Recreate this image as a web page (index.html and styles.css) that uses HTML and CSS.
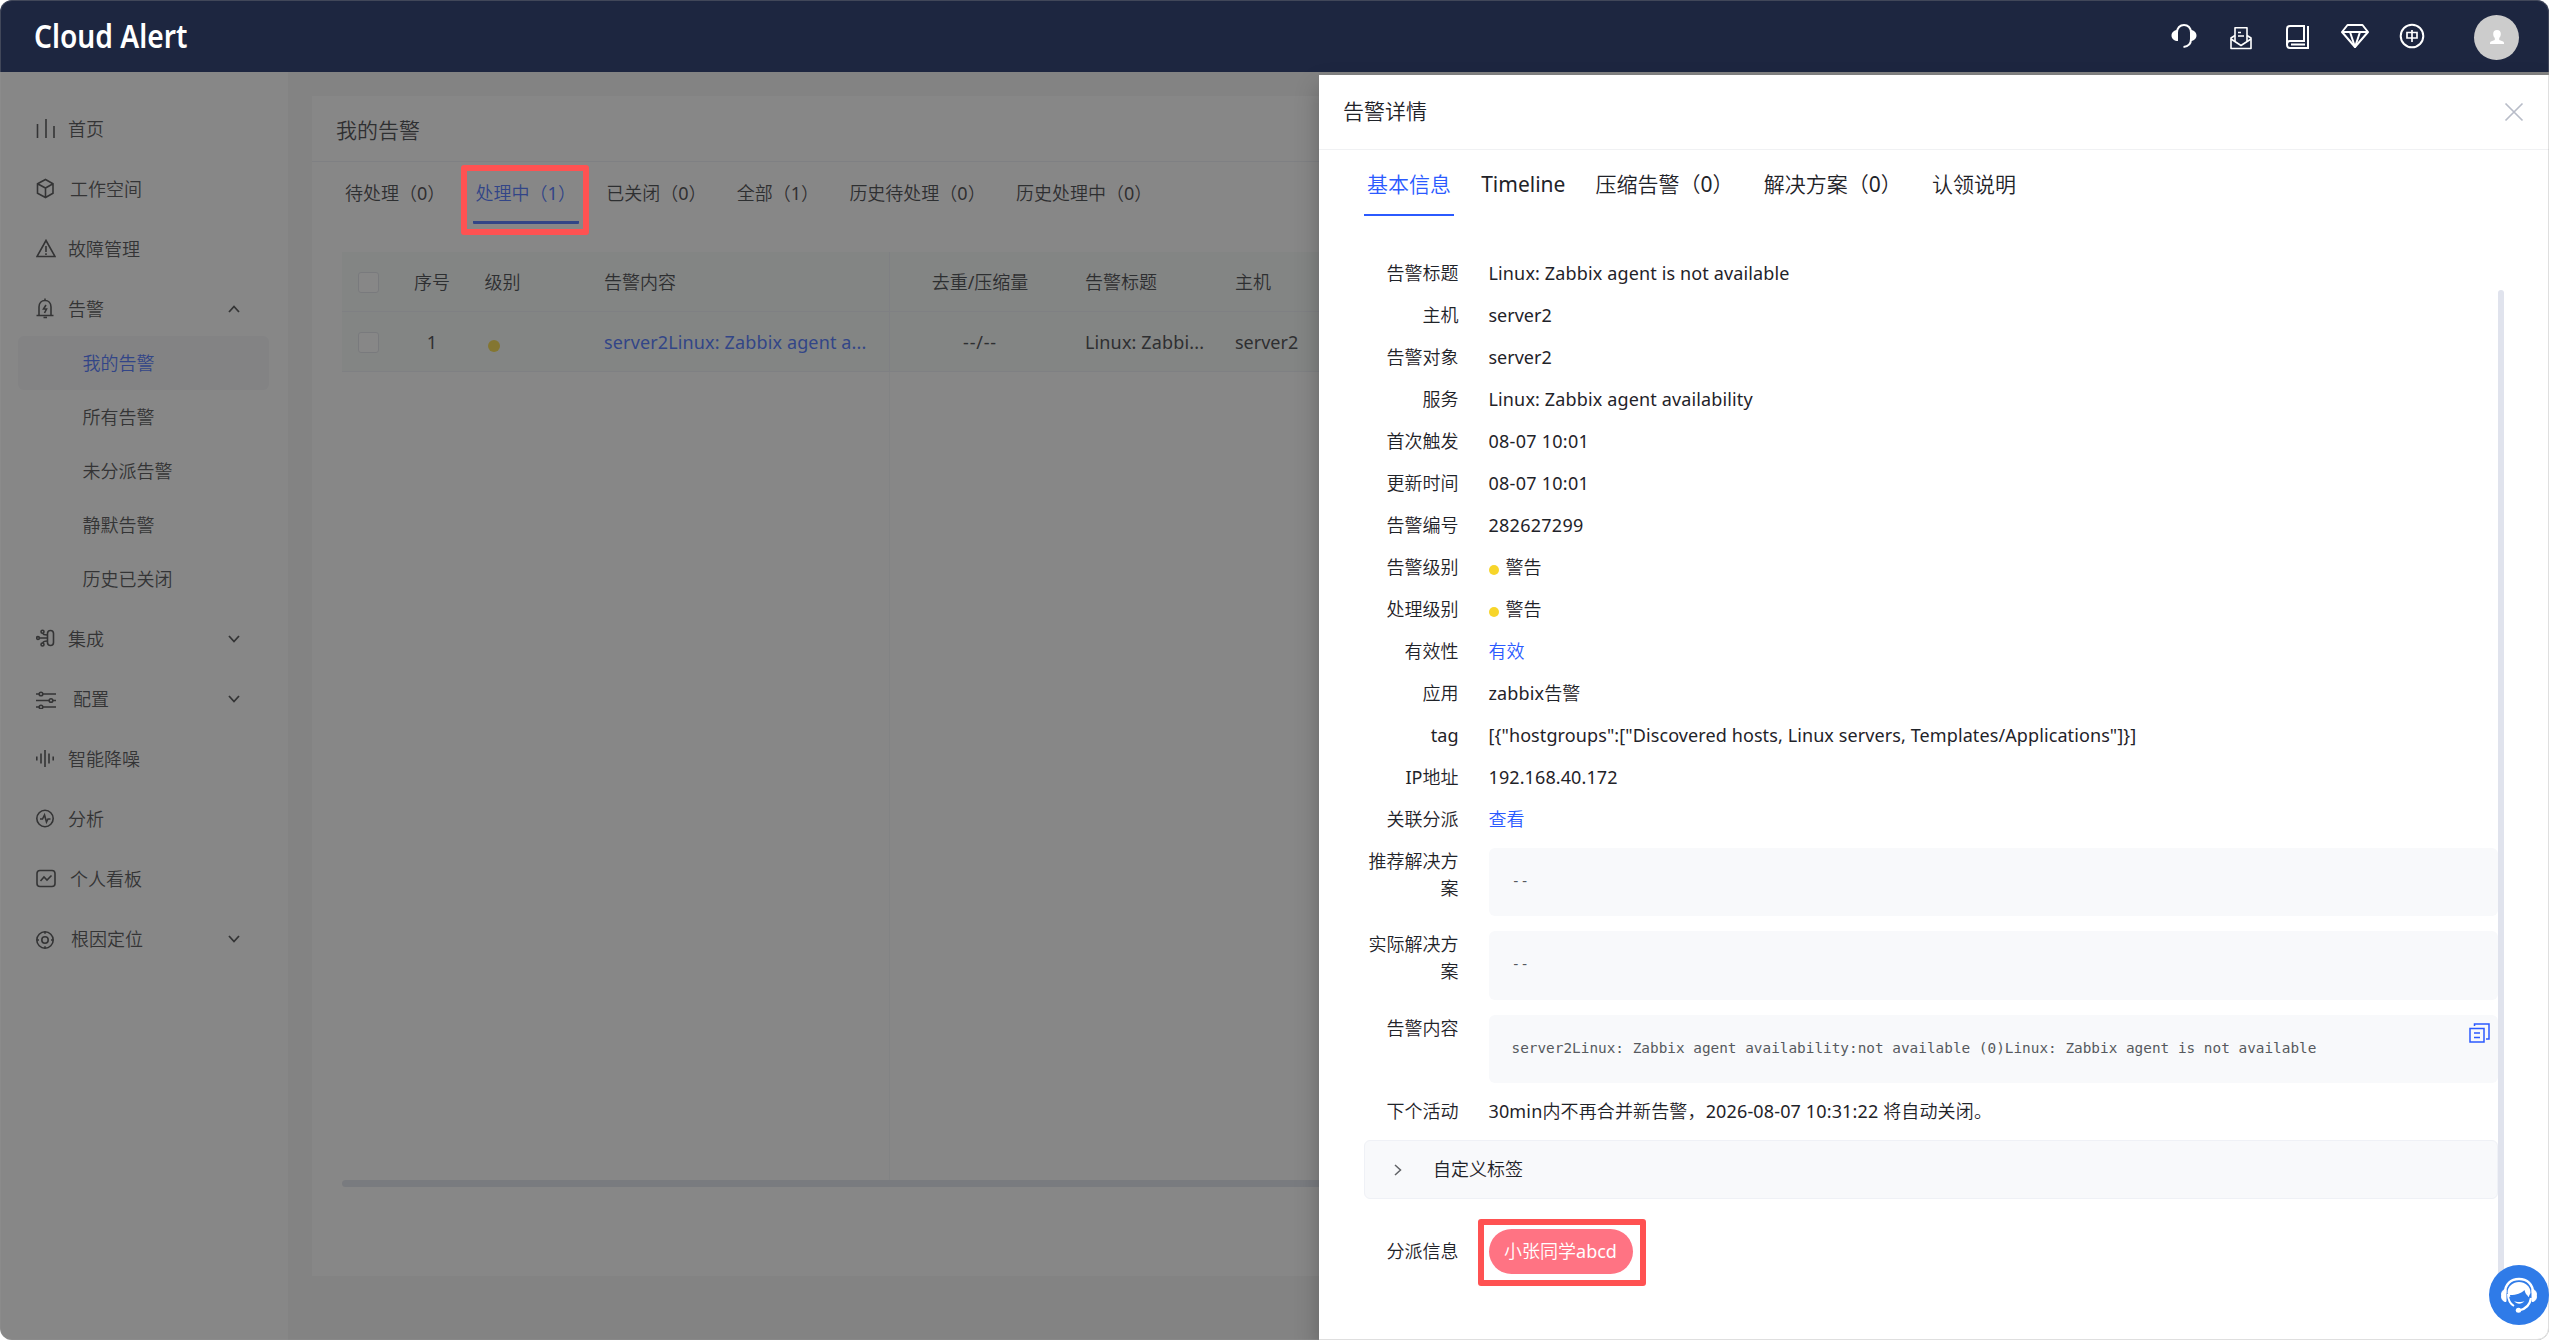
FILE: index.html
```html
<!DOCTYPE html>
<html lang="zh-CN">
<head>
    <meta charset="UTF-8">
    <meta name="viewport" content="width=device-width, initial-scale=1.0">
    <title>Cloud Alert</title>
    <link rel="stylesheet" href="styles.css">
</head>
<body>
<div class="window">
    <header class="topbar">
        <div class="logo">Cloud Alert</div>
        <div class="top-icons">
            <span class="top-icon"><svg width="26" height="26" viewBox="0 0 26 26" fill="none" stroke="#fff" stroke-width="2"><path d="M6 13V9.500C6 5 9 2 13 2s7 3 7 7.500V16c0 5-3 7.500-7.500 8"/><path d="M7 7v11C3.500 18 0.500 16 0.500 12.500S3.500 7 7 7zM19 7v11c3.500 0 6.500-2 6.500-5.500S22.500 7 19 7z" fill="#fff" stroke="none"/></svg></span>
            <span class="top-icon mail"><svg width="24" height="24" viewBox="0 0 24 24" fill="none" stroke="#fff" stroke-width="1.600" stroke-linejoin="round"><path d="M6 9.500L2 12v10.500h20V12l-4-2.500"/><path d="M6 15V1.800h12V15"/><path d="M2 13l10 6.500L22 13"/><path d="M9 6.500h3M9 10h6"/></svg></span>
            <span class="top-icon book"><svg width="24" height="26" viewBox="0 0 24 26" fill="none" stroke="#fff" stroke-width="2"><path d="M22 2v22H4c-2 0-3-1-3-3V5c0-2 1-3 3-3h14v15H4c-2 0-3 1.500-3 4"/><path d="M5 20.500h14"/></svg></span>
            <span class="top-icon"><svg width="28" height="26" viewBox="0 0 28 26" fill="none" stroke="#fff" stroke-width="2" stroke-linejoin="round"><path d="M6.500 2h15L27 9 14 24 1 9z"/><path d="M1.500 9h25M9 9l5 15 5-15"/></svg></span>
            <span class="top-icon"><svg width="26" height="26" viewBox="0 0 26 26" fill="none" stroke="#fff" stroke-width="2"><circle cx="13" cy="13" r="11.300"/><path d="M8 9.500h10v5.500H8zM13 7v12" stroke-width="1.700"/></svg></span>
            <span class="avatar"><svg width="14" height="15" viewBox="0 0 14 15" fill="#fff"><path d="M7 0c2.500 0 3.800 1.600 3.800 4 0 2-.8 3.200-1.600 4v2l3.300 1.200c1 .4 1.500 1 1.500 2V14H0v-.8c0-1 .5-1.600 1.500-2L4.800 10V8C4 7.200 3.200 6 3.200 4 3.200 1.600 4.500 0 7 0z"/></svg></span>
        </div>
    </header>

    <div class="layout">
        <nav class="sidebar">
            <a class="menu-item"><svg width="20" height="22" viewBox="0 0 20 22"><path d="M1.500 6v14M10 1v19M18 8v12"/></svg>首页</a>
            <a class="menu-item cube"><svg width="20" height="22" viewBox="0 0 20 22"><path d="M9.500 1.500L17 5.700v9.600L9.500 19.500 1.500 15.300V5.700zM1.500 5.700l8 4.300L17 5.700M9.500 10v9.500"/></svg>工作空间</a>
            <a class="menu-item"><svg width="20" height="22" viewBox="0 0 20 22"><path d="M10 2.500L19 18.500H1zM10 8v6M10 15.200v1.800"/></svg>故障管理</a>
            <a class="menu-item"><svg width="20" height="22" viewBox="0 0 20 22"><path d="M3 17V9c0-4 2.500-6.500 6-6.500S15 5 15 9v8M.5 17.500h17M7.500 19.500H11M9 .5v2M10 7l-2.500 4h3l-2 4"/></svg>告警<svg class="arrow" width="12" height="8" viewBox="0 0 12 8"><path d="M1 7l5-5.500L11 7"/></svg></a>
            <div class="submenu">
                <a class="sub-item active">我的告警</a>
                <a class="sub-item">所有告警</a>
                <a class="sub-item">未分派告警</a>
                <a class="sub-item">静默告警</a>
                <a class="sub-item">历史已关闭</a>
            </div>
            <a class="menu-item"><svg width="20" height="20" viewBox="0 0 20 20"><rect x="11.500" y="1.500" width="6" height="15" rx="3"/><circle cx="6.500" cy="2.800" r="1.500"/><circle cx="2" cy="9" r="1.400"/><circle cx="6.500" cy="15.500" r="1.500"/><path d="M3.500 9H11.500M7 4.300C7 6 9 6 11.500 6M7 14c0-2 2-2 4.500-2"/></svg>集成<svg class="arrow" width="12" height="8" viewBox="0 0 12 8"><path d="M1 1l5 5.500L11 1"/></svg></a>
            <a class="menu-item wide"><svg width="20" height="20" viewBox="0 0 20 20"><path d="M0 5h3M7 5h13M0 11.500h13M17 11.500h3M0 18h3M7 18h13"/><circle cx="5" cy="5" r="1.800"/><circle cx="15" cy="11.500" r="1.800"/><circle cx="5" cy="18" r="1.800"/></svg>配置<svg class="arrow" width="12" height="8" viewBox="0 0 12 8"><path d="M1 1l5 5.500L11 1"/></svg></a>
            <a class="menu-item"><svg width="20" height="20" viewBox="0 0 20 20"><path d="M.8 7.500v4M5 4.500v10M9 1v17M13 4.500v10M17.200 7.500v4"/></svg>智能降噪</a>
            <a class="menu-item"><svg width="20" height="20" viewBox="0 0 20 20"><circle cx="9" cy="9.500" r="8.200"/><path d="M4 10h2.500l2-4 2 7 1.500-3h2.500"/></svg>分析</a>
            <a class="menu-item cube"><svg width="20" height="20" viewBox="0 0 20 20"><rect x="1" y="1.500" width="18" height="16" rx="3"/><path d="M4.500 12l3.500-4 3 3 4.500-4.500"/></svg>个人看板</a>
            <a class="menu-item root"><svg width="20" height="20" viewBox="0 0 20 20"><circle cx="9" cy="11" r="8.200"/><circle cx="9" cy="11" r="3.200"/><path d="M9 2.800v2M9 17.200v2M1 11h2M15 11h2"/></svg>根因定位<svg class="arrow" width="12" height="8" viewBox="0 0 12 8"><path d="M1 1l5 5.500L11 1"/></svg></a>
        </nav>

        <main class="main">
            <section class="card">
                <h1 class="card-title">我的告警</h1>
                <div class="tabs">
                    <span class="tab">待处理（0）</span>
                    <span class="tab active">处理中（1）</span>
                    <span class="tab">已关闭（0）</span>
                    <span class="tab">全部（1）</span>
                    <span class="tab">历史待处理（0）</span>
                    <span class="tab">历史处理中（0）</span>
                </div>
                <div class="table">
                    <div class="tr">
                        <span class="check"></span>
                        <span class="center">序号</span>
                        <span>级别</span>
                        <span>告警内容</span>
                        <span class="center line">去重/压缩量</span>
                        <span>告警标题</span>
                        <span>主机</span>
                    </div>
                    <div class="tr">
                        <span class="check"></span>
                        <span class="center">1</span>
                        <span class="level"><i class="dot"></i></span>
                        <span class="link latin">server2Linux: Zabbix agent a...</span>
                        <span class="center line dashes">--/--</span>
                        <span class="latin">Linux: Zabbi...</span>
                        <span>server2</span>
                    </div>
                    <div class="table-rest"></div>
                    <div class="hbar"></div>
                </div>
            </section>
        </main>
    </div>

    <div class="overlay"></div>
    <div class="mark mark-tab"></div>

    <aside class="drawer">
        <div class="drawer-head">
            <span>告警详情</span>
            <svg width="20" height="20" viewBox="0 0 20 20" fill="none" stroke="#b8bcc8" stroke-width="1.700"><path d="M1.500 1.500l17 17M18.500 1.500l-17 17"/></svg>
        </div>
        <div class="drawer-tabs">
            <span class="drawer-tab active">基本信息</span>
            <span class="drawer-tab">Timeline</span>
            <span class="drawer-tab">压缩告警（0）</span>
            <span class="drawer-tab">解决方案（0）</span>
            <span class="drawer-tab">认领说明</span>
        </div>
        <div class="drawer-body">
            <div class="info">
                <div class="row"><label>告警标题</label><span class="latin">Linux: Zabbix agent is not available</span></div>
                <div class="row"><label>主机</label><span>server2</span></div>
                <div class="row"><label>告警对象</label><span>server2</span></div>
                <div class="row"><label>服务</label><span class="latin">Linux: Zabbix agent availability</span></div>
                <div class="row"><label>首次触发</label><span class="digits">08-07 10:01</span></div>
                <div class="row"><label>更新时间</label><span class="digits">08-07 10:01</span></div>
                <div class="row"><label>告警编号</label><span class="digits">282627299</span></div>
                <div class="row"><label>告警级别</label><span><i class="dot"></i>警告</span></div>
                <div class="row"><label>处理级别</label><span><i class="dot"></i>警告</span></div>
                <div class="row"><label>有效性</label><span class="link">有效</span></div>
                <div class="row"><label>应用</label><span class="latin">zabbix告警</span></div>
                <div class="row"><label>tag</label><span class="tag">[{"hostgroups":["Discovered hosts, Linux servers, Templates/Applications"]}]</span></div>
                <div class="row"><label>IP地址</label><span class="tag">192.168.40.172</span></div>
                <div class="row"><label>关联分派</label><span class="link">查看</span></div>
                <div class="row"><label>推荐解决方案</label><pre class="code">--</pre></div>
                <div class="row"><label>实际解决方案</label><pre class="code">--</pre></div>
                <div class="row"><label>告警内容</label><pre class="code">server2Linux: Zabbix agent availability:not available (0)Linux: Zabbix agent is not available<svg class="copy" width="21" height="21" viewBox="0 0 21 21" fill="none" stroke="#2b5aff" stroke-width="1.500"><path d="M1 5.500h14V19H1zM5.500 3V1H20v15h-3M5 10h6M5 14.500h6"/></svg></pre></div>
                <div class="row"><label>下个活动</label><span class="next">30min内不再合并新告警，2026-08-07 10:31:22 将自动关闭。</span></div>
                <div class="collapse">
                    <svg width="8" height="12" viewBox="0 0 8 12" fill="none" stroke="#606266" stroke-width="1.500"><path d="M1 1l5.500 5L1 11"/></svg>
                    <span>自定义标签</span>
                </div>
                <div class="assign">
                    <label>分派信息</label>
                    <span class="pill">小张同学abcd<i class="mark mark-pill"></i></span>
                </div>
            </div>
            <div class="vbar"></div>
        </div>
    </aside>

    <div class="frame"></div>
    <div class="service">
        <svg width="36" height="36" viewBox="0 0 36 36" fill="none">
            <path d="M4 16C4 7 10 2 18 2s14 5 14 14" stroke="#fff" stroke-width="2.500"/>
            <path d="M6.500 16C6.500 9 12 5 18 5s11.500 4 11.500 11l-2 4H8.500z" fill="#fff"/>
            <path d="M9 18c7 0 11-1.500 14.500-5 .5 3 2 5 3.500 6 0 6-4 10-9 10S9.500 25 9 18z" fill="#2f7be8"/>
            <path d="M7 17c0 6 2.500 10 6 12" stroke="#fff" stroke-width="2"/>
            <path d="M13 24c3 3.500 7.500 3.500 10.500 0-2 1.300-8.500 1.300-10.500 0z" fill="#fff"/>
            <path d="M30 21c-1 7-5 11-12 12.500" stroke="#fff" stroke-width="2.200"/>
            <path d="M5 12.500v12c-3 0-4.500-2-4.500-6s1.500-6 4.500-6zM31 12.500v12c3 0 4.500-2 4.500-6s-1.500-6-4.500-6z" fill="#fff" stroke="#fff"/>
            <ellipse cx="17.500" cy="33.200" rx="2.700" ry="2.500" fill="#fff"/>
        </svg>
    </div>
</div>
</body>
</html>
```

FILE: styles.css
```css
* {
    box-sizing: border-box;
}
body {
    margin: 0;
    background-color: white;
    color: #1f2329;
    font-family: "Noto Sans", "Noto Sans CJK SC DemiLight", "Noto Sans CJK SC", sans-serif;
    font-size: 18px;
    line-height: 27px;
}
.window {
    position: relative;
    width: 2549px;
    height: 1340px;
    border-radius: 12px;
    overflow: hidden;
    display: flex;
    flex-direction: column;
}
.frame {
    position: absolute;
    inset: 0;
    border: 1px solid rgba(150, 150, 150, 0.3);
    border-radius: 12px;
}

/* top bar */
.topbar {
    height: 72px;
    background-color: #1d2640;
    display: flex;
    align-items: center;
    justify-content: space-between;
    padding: 0 30px 0 34px;
}
.logo {
    color: white;
    font-size: 31.5px;
    font-weight: 600;
    line-height: 70px;
    transform: scaleX(0.895);
    transform-origin: left;
}
.top-icons {
    display: flex;
    align-items: center;
}
.top-icon {
    width: 57px;
    height: 26px;
    display: flex;
    justify-content: center;
}
.top-icon.mail {
    padding-top: 3px;
}
.top-icon.book {
    padding-top: 1px;
}
.avatar {
    width: 45px;
    height: 45px;
    margin: 3px 0 0 34px;
    border-radius: 50%;
    background-color: #ccc;
    display: flex;
    align-items: center;
    justify-content: center;
}

/* sidebar */
.layout {
    flex: 1;
    display: flex;
    background-color: #f4f4f5;
}
.sidebar {
    width: 288px;
    padding-top: 27px;
    background-color: white;
    color: #303133;
}
.menu-item {
    height: 60px;
    padding: 0 48px 0 36px;
    display: flex;
    align-items: center;
    gap: 12px;
}
.menu-item svg {
    fill: none;
    stroke: #303133;
    stroke-width: 1.6;
}
.menu-item .arrow {
    margin-left: auto;
    stroke-width: 1.8;
}
.menu-item.cube {
    gap: 14px;
}
.menu-item.wide {
    gap: 17px;
}
.menu-item.root {
    gap: 15px;
}
.submenu {
    margin: -3px 0 3px;
    padding: 0 19px 0 18px;
}
.sub-item {
    display: block;
    height: 54px;
    line-height: 54px;
    padding-left: 64.5px;
    border-radius: 6px;
}
.sub-item.active {
    background-color: #f4f5f7;
    color: #2b5aff;
}

/* alert list */
.main {
    flex: 1;
    padding: 24px 0 64px 24px;
    display: flex;
}
.card {
    flex: 1;
    background-color: white;
}
.card-title {
    margin: 0;
    height: 66px;
    padding-left: 24px;
    border-bottom: 1px solid #ebeef5;
    font-size: 21px;
    font-weight: 400;
    line-height: 69px;
}
.tabs {
    height: 90px;
    padding-left: 30px;
    display: flex;
    align-items: flex-start;
    gap: 24.3px;
}
.tab {
    padding: 0 3px;
    height: 62px;
    line-height: 63px;
    border-bottom: 3px solid transparent;
    border-radius: 1px;
}
.tab.active {
    color: #2b5aff;
    border-bottom-color: #2b5aff;
}
.table {
    margin-left: 30px;
    display: flex;
    flex-direction: column;
}
.tr {
    height: 60px;
    background-color: #f4faf7;
    border-bottom: 1px solid #ebeef5;
    display: grid;
    grid-template-columns: 58px 64px 140px 285px 181px 151px 1fr;
    align-items: center;
    line-height: 60px;
}
.tr .check {
    width: 21px;
    height: 21px;
    margin: 0 0 0 16px;
    border: 1px solid #dcdfe6;
    border-radius: 3px;
    background-color: white;
}
.center {
    text-align: center;
}
.line {
    border-left: 1px solid #ebeef5;
}
.tr > span:nth-child(3) {
    padding-left: 20.5px;
}
.tr > span:nth-child(5) {
    height: 60px;
}
.tr > span:nth-child(6) {
    padding-left: 15px;
}
.tr > span:nth-child(7) {
    padding-left: 14px;
}
.dot {
    display: inline-block;
    width: 10px;
    height: 10px;
    border-radius: 50%;
    background-color: #f7d52a;
}
.level .dot {
    width: 12px;
    height: 12px;
    margin-left: 3px;
    vertical-align: -3px;
}
.dashes {
    letter-spacing: 0.8px;
}
.table-rest {
    height: 808px;
    margin-left: 547px;
    border-left: 1px solid #f2f4f8;
}
.hbar {
    height: 7px;
    border-radius: 4px 0 0 4px;
    background-color: #dde0ea;
}
.link {
    color: #2b5aff;
}

.overlay {
    position: absolute;
    top: 72px;
    left: 0;
    right: 0;
    bottom: 0;
    background-color: rgba(55, 55, 55, 0.6);
}
.mark {
    position: absolute;
    border: 6px solid #ff5252;
    border-radius: 3px;
}
.mark-tab {
    left: 461px;
    top: 165px;
    width: 128px;
    height: 70px;
}
.mark-pill {
    left: -11px;
    top: -10px;
    width: 168px;
    height: 67px;
}

/* detail drawer */
.drawer {
    position: absolute;
    top: 75px;
    left: 1319px;
    right: 0;
    bottom: 0;
    background-color: white;
    box-shadow: 0 12px 22px rgba(0, 0, 0, 0.25);
}
.drawer-head {
    height: 75px;
    padding: 0 25px 0 24px;
    border-bottom: 1px solid #f0f1f3;
    display: flex;
    align-items: center;
    justify-content: space-between;
    font-size: 21px;
}
.drawer-head span {
    padding-bottom: 2px;
}
.drawer-tabs {
    height: 66px;
    padding-left: 45px;
    display: flex;
    gap: 24.2px;
    font-size: 21px;
}
.drawer-tab {
    padding: 5px 3px 1px;
    line-height: 58px;
    border-bottom: 2px solid transparent;
}
.drawer-tab.active {
    color: #2b5aff;
    border-bottom-color: #2b5aff;
}
.drawer-body {
    display: flex;
    padding-left: 45px;
}
.info {
    width: 1134px;
    padding-top: 36px;
}
.row {
    display: flex;
    padding: 7.5px 0;
}
.row label,
.assign label {
    width: 94.5px;
    margin-right: 30px;
    text-align: right;
}
.row .dot {
    margin-right: 7px;
    vertical-align: -1px;
}
.latin {
    letter-spacing: 0.14px;
}
.tag {
    letter-spacing: 0.1px;
}
.digits {
    letter-spacing: 0.26px;
}
.next {
    letter-spacing: 0.14px;
}
.code {
    position: relative;
    flex: 1;
    height: 68.5px;
    margin: 0;
    padding-left: 23px;
    border-radius: 6px;
    background-color: #f8f9fb;
    color: #56595e;
    font-family: "DejaVu Sans Mono", monospace;
    font-size: 14.38px;
    line-height: 66px;
}
.copy {
    position: absolute;
    right: 8px;
    top: 8px;
}
.collapse {
    height: 59px;
    margin-top: 7.5px;
    padding-left: 29px;
    border: 1px solid #eff1f6;
    border-radius: 6px;
    background-color: #f8f9fb;
    display: flex;
    align-items: center;
    gap: 31px;
}
.assign {
    margin-top: 30px;
    display: flex;
    align-items: center;
}
.pill {
    position: relative;
    width: 144px;
    height: 45px;
    border-radius: 23px;
    background-color: #ff7383;
    color: white;
    line-height: 45px;
    text-align: center;
}
.vbar {
    width: 6px;
    height: 1000px;
    margin-top: 74px;
    border-radius: 3px;
    background-color: #e0e3ed;
}

.service {
    position: absolute;
    right: 0;
    bottom: 15px;
    width: 60px;
    height: 60px;
    border-radius: 50%;
    background-color: #2f7be8;
    display: flex;
    align-items: center;
    justify-content: center;
}
```
